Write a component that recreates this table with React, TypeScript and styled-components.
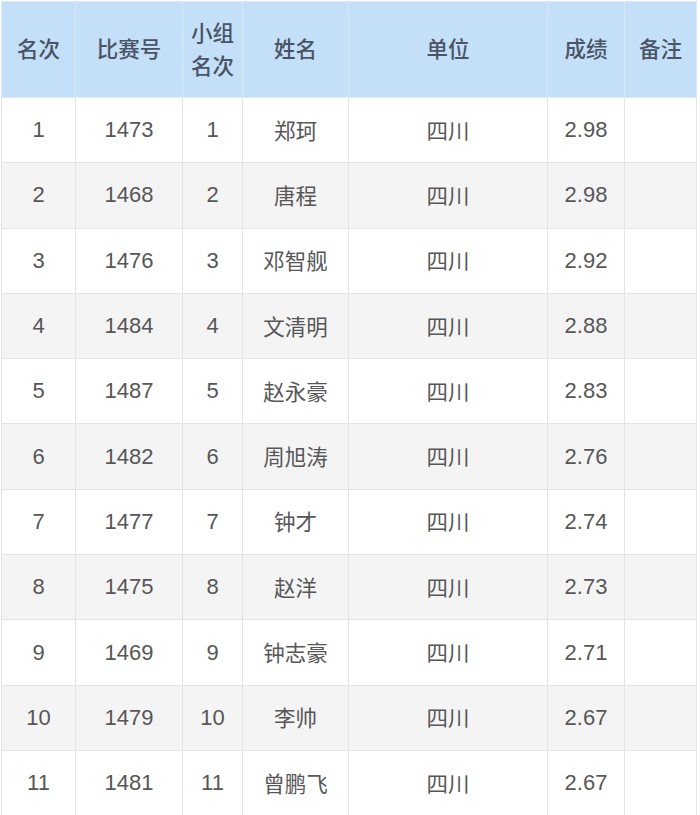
import React from "react";
import styled, { createGlobalStyle } from "styled-components";

const Global = createGlobalStyle`
  html, body { margin: 0; padding: 0; background: #ffffff; }
  body { font-family: "Liberation Sans", "Noto Sans CJK SC", sans-serif; }
`;

const Page = styled.div`
  padding: 1px 0 0 1px;
  width: 700px;
  height: 815px;
  overflow: hidden;
  box-sizing: border-box;
`;

const Table = styled.table`
  border-collapse: collapse;
  table-layout: fixed;
  width: 695px;
  font-size: 21px;
`;

const HeadCell = styled.th`
  height: 91px;
  padding: 0 0 4px 0;
  background: #c4e0f9;
  color: #4a5465;
  font-family: "Noto Sans CJK SC", sans-serif;
  font-weight: 500;
  font-size: 21.5px;
  line-height: 33px;
  text-align: center;
  vertical-align: middle;
  border: 1px solid #dde8f3;
`;

const Row = styled.tr<{ $alt: boolean }>`
  background: ${(p) => (p.$alt ? "#f4f4f5" : "#ffffff")};
`;

const Cell = styled.td<{ $cjk?: boolean }>`
  height: ${(p) => (p.$cjk ? "62.3px" : "64.3px")};
  padding: ${(p) => (p.$cjk ? "0 0 2px 0" : "0")};
  text-align: center;
  vertical-align: middle;
  color: #575757;
  font-family: ${(p) =>
    p.$cjk ? `"Noto Sans CJK SC", sans-serif` : `"Liberation Sans", sans-serif`};
  font-size: ${(p) => (p.$cjk ? "21.5px" : "22px")};
  border: 1px solid #e4e4e6;
`;

const widths = [74, 107, 60, 106, 199, 77, 72];

const rows: [string, string, string, string, string][] = [
  ["1", "1473", "1", "郑珂", "2.98"],
  ["2", "1468", "2", "唐程", "2.98"],
  ["3", "1476", "3", "邓智舰", "2.92"],
  ["4", "1484", "4", "文清明", "2.88"],
  ["5", "1487", "5", "赵永豪", "2.83"],
  ["6", "1482", "6", "周旭涛", "2.76"],
  ["7", "1477", "7", "钟才", "2.74"],
  ["8", "1475", "8", "赵洋", "2.73"],
  ["9", "1469", "9", "钟志豪", "2.71"],
  ["10", "1479", "10", "李帅", "2.67"],
  ["11", "1481", "11", "曾鹏飞", "2.67"],
];

export default function App() {
  return (
    <Page>
      <Global />
      <Table>
        <colgroup>
          {widths.map((w, i) => (
            <col key={i} style={{ width: w }} />
          ))}
        </colgroup>
        <thead>
          <tr>
            <HeadCell>名次</HeadCell>
            <HeadCell>比赛号</HeadCell>
            <HeadCell>
              小组
              <br />
              名次
            </HeadCell>
            <HeadCell>姓名</HeadCell>
            <HeadCell>单位</HeadCell>
            <HeadCell>成绩</HeadCell>
            <HeadCell>备注</HeadCell>
          </tr>
        </thead>
        <tbody>
          {rows.map((r, i) => (
            <Row key={i} $alt={i % 2 === 1}>
              <Cell>{r[0]}</Cell>
              <Cell>{r[1]}</Cell>
              <Cell>{r[2]}</Cell>
              <Cell $cjk>{r[3]}</Cell>
              <Cell $cjk>四川</Cell>
              <Cell>{r[4]}</Cell>
              <Cell />
            </Row>
          ))}
        </tbody>
      </Table>
    </Page>
  );
}
